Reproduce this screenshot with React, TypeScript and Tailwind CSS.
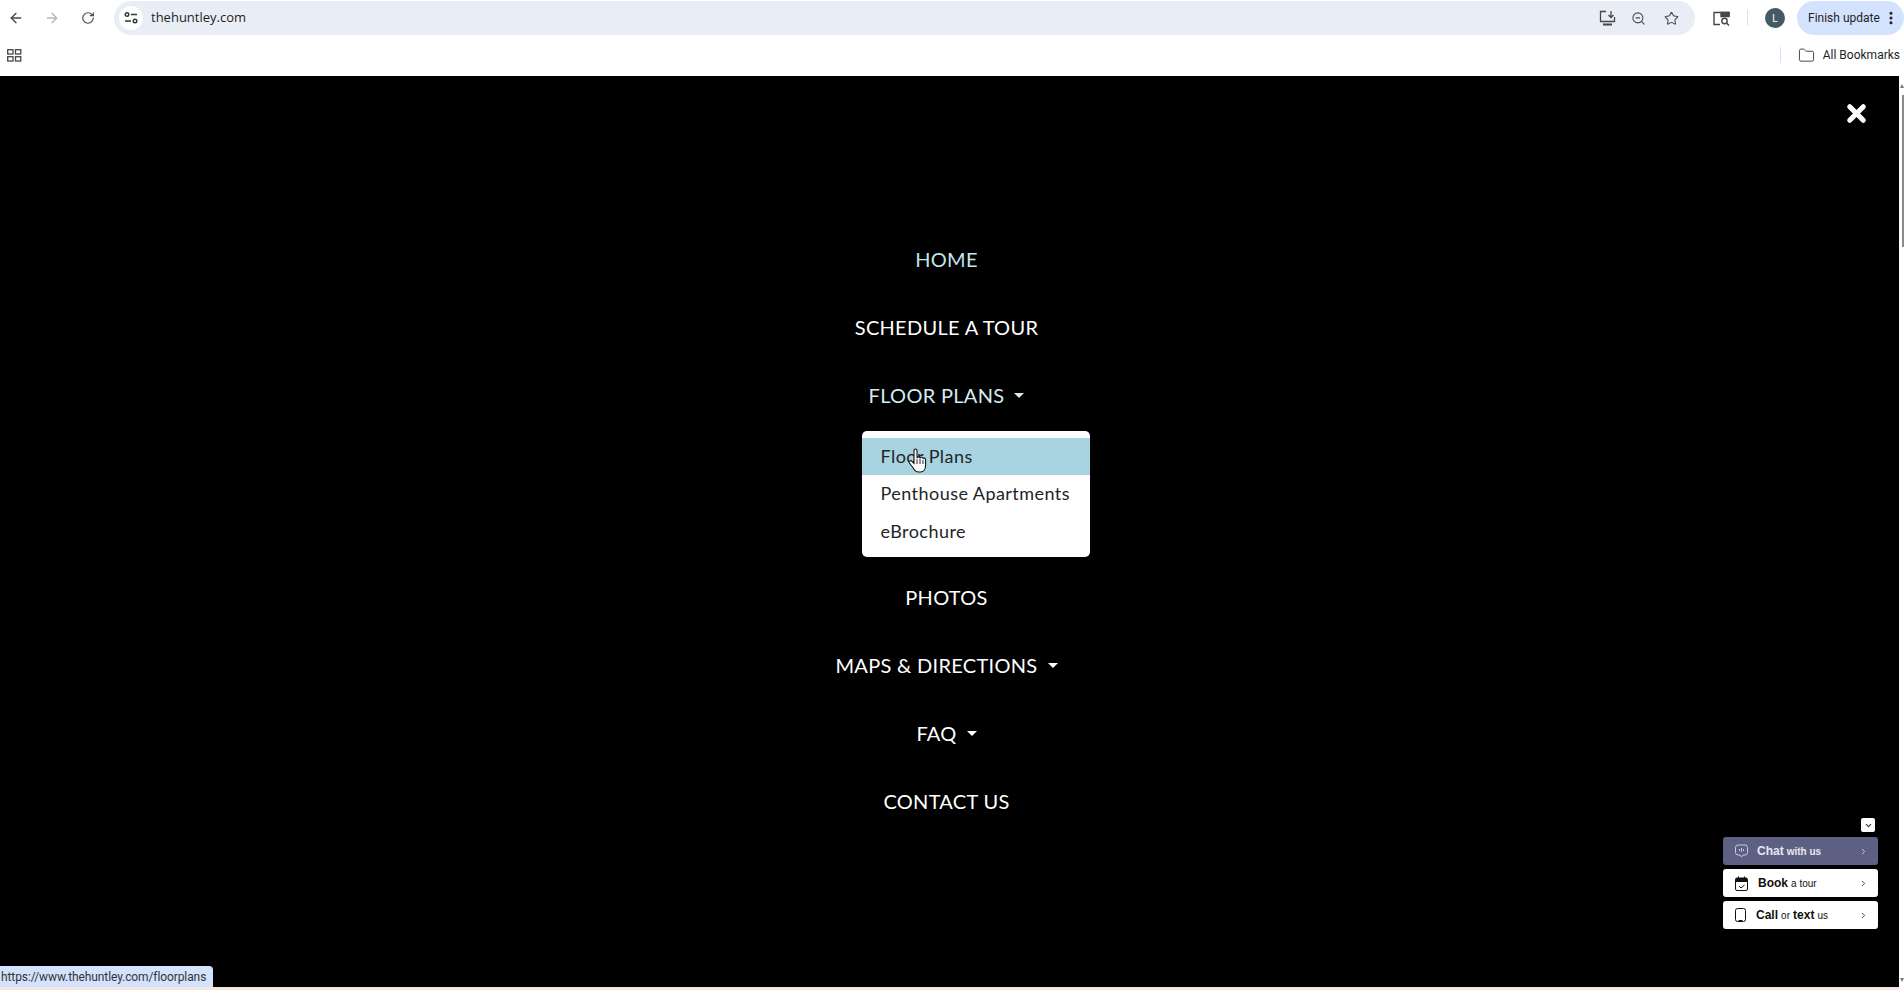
import { ArrowLeft, ArrowRight, RotateCw, Star, ZoomOut, Folder, EllipsisVertical, ChevronDown, ChevronRight, X } from 'lucide-react'

// Nav entries of the overlay menu
const navItems = [
  { label: 'HOME', tint: 'text-[#c4e4ec]' },
  { label: 'SCHEDULE A TOUR', tint: 'text-white' },
  { label: 'FLOOR PLANS', tint: 'text-[#d3ecf2]', caret: true, open: true },
  { label: 'PHOTOS', tint: 'text-white' },
  { label: 'MAPS & DIRECTIONS', tint: 'text-white', caret: true },
  { label: 'FAQ', tint: 'text-white', caret: true },
  { label: 'CONTACT US', tint: 'text-white' },
]

function Caret() {
  return <span className="ml-[10px] inline-block border-x-[5px] border-t-[5px] border-x-transparent border-t-current align-middle" />
}

function FloorPlansMenu() {
  return (
    <div className="relative left-[29px] mt-[2px] mb-[6px] w-[228px] rounded-[5px] bg-white py-[7px] text-[18px] leading-[37px] font-normal tracking-[0.45px] text-[#212529]">
      <div className="h-[37px] bg-[#a8d4e2] px-[19px]">Floor Plans</div>
      <div className="h-[38px] px-[19px]">Penthouse Apartments</div>
      <div className="h-[37px] px-[19px]">eBrochure</div>
      <svg className="absolute left-[46px] top-[17px]" width="20" height="26" viewBox="0 0 20 26">
        <path d="M6 2.500c0-2 3-2 3 0V10c.4-1.600 3-1.600 3 .3.4-1.600 2.800-1.400 3 .5.5-1.200 2.600-1 2.600 1V17c0 4-2 7-5 7h-2c-2.500 0-4-1.500-5-3.500L1.400 15c-1-2 1.300-3.200 2.600-1.500L6 15.500z" fill="#fff" stroke="#111" strokeWidth="1.100" />
        <path d="M9 11v5M12 11v5M15 12v4" stroke="#111" strokeWidth="0.900" />
      </svg>
    </div>
  )
}

function ChatWidget() {
  return (
    <div className="absolute bottom-[61px] right-[21px] flex w-[155px] flex-col items-end font-['Liberation_Sans',sans-serif] text-[11px]">
      <div className="mr-[3px] mb-[5px] flex h-[14px] w-[14px] items-center justify-center rounded-[2px] bg-white">
        <ChevronDown size={9} strokeWidth={3} color="#333" />
      </div>
      <div className="flex h-[28px] w-full items-center rounded-[3px] bg-[#5d6083] pl-[12px] pr-[10px] text-[#e8e8f0]">
        <svg width="13" height="14" viewBox="0 0 13 14" fill="none" stroke="#d5d6e2" strokeWidth="0.900">
          <path d="M3 1h7a2.500 2.500 0 0 1 2.500 2.500v5A2.500 2.500 0 0 1 10 11H8l-1.500 2L5 11H3A2.500 2.500 0 0 1 .5 8.500v-5A2.500 2.500 0 0 1 3 1z" />
          <path d="M4.500 5v2M6.500 4v4M8.500 5v2" />
        </svg>
        <span className="ml-[9px] flex-1 font-bold"><span className="text-[12px]">Chat</span> <span className="text-[10px]">with us</span></span>
        <ChevronRight size={9} strokeWidth={2} />
      </div>
      <div className="mt-[4px] flex h-[28px] w-full items-center rounded-[3px] bg-white pl-[12px] pr-[10px] text-[#111]">
        <svg width="13" height="15" viewBox="0 0 13 15" fill="none" stroke="#111" strokeWidth="1">
          <path d="M.5 5.500h12V13a1.500 1.500 0 0 1-1.500 1.500H2A1.500 1.500 0 0 1 .5 13z" />
          <path d="M.5 5.500V3.500A1.500 1.500 0 0 1 2 2h9a1.500 1.500 0 0 1 1.500 1.500v2z" fill="#111" />
          <path d="M3.500 .5v3M9.500 .5v3" />
          <path d="M4 10l2 2 3.500-3" />
        </svg>
        <span className="ml-[10px] flex-1"><span className="text-[12px] font-bold">Book</span> <span className="text-[10px]">a tour</span></span>
        <ChevronRight size={9} strokeWidth={2} />
      </div>
      <div className="mt-[4px] flex h-[28px] w-full items-center rounded-[3px] bg-white pl-[12px] pr-[10px] text-[#111]">
        <svg width="11" height="14" viewBox="0 0 11 14" fill="none" stroke="#111" strokeWidth="1">
          <rect x=".5" y=".5" width="10" height="13" rx="2" />
          <path d="M3.500 12.500h4" />
        </svg>
        <span className="ml-[10px] flex-1"><span className="text-[12px] font-bold">Call</span> <span className="text-[10px]">or</span> <span className="text-[12px] font-bold">text</span> <span className="text-[10px]">us</span></span>
        <ChevronRight size={9} strokeWidth={2} />
      </div>
    </div>
  )
}

export default function App() {
  return (
    <div className="flex h-[990px] w-[1904px] flex-col overflow-hidden bg-white font-['Liberation_Sans',sans-serif]">
      {/* toolbar */}
      <div className="flex h-[36px] shrink-0 items-center pl-[7px] text-[#474747]">
        <ArrowLeft size={16} strokeWidth={2} className="ml-[1px]" />
        <ArrowRight size={16} strokeWidth={2} className="ml-[20px] text-[#b5b5b5]" />
        <RotateCw size={14} strokeWidth={2} className="ml-[21px]" />
        <div className="ml-[19px] flex h-[34px] w-[1581px] items-center rounded-full bg-[#e9eef6]">
          <div className="ml-[5px] flex h-[24px] w-[24px] items-center justify-center rounded-full bg-white">
            <svg width="14" height="12" viewBox="0 0 14 12" fill="none" stroke="#333" strokeWidth="1.400">
              <circle cx="3" cy="2.500" r="1.800" />
              <path d="M7 2.500h6M1 9h6" />
              <circle cx="11" cy="9" r="1.800" />
            </svg>
          </div>
          <span className="ml-[8px] font-['Open_Sans',sans-serif] text-[13px] text-[#1f1f1f]">thehuntley.com</span>
          <div className="ml-auto flex items-center text-[#474747]">
            <svg width="17" height="16" viewBox="0 0 17 16" fill="none" stroke="#474747" strokeWidth="1.300">
              <path d="M7 1.500H1.500v10h14V7" />
              <path d="M4 14.500h9" strokeWidth="2" />
              <path d="M12 1v6M9.500 5l2.500 2.500L14.500 5" />
            </svg>
            <ZoomOut size={15} strokeWidth={1.700} className="ml-[15px]" />
            <Star size={15} strokeWidth={1.700} className="mr-[16px] ml-[18px]" />
          </div>
        </div>
        <svg className="ml-[18px]" width="17" height="15" viewBox="0 0 17 15" fill="none" stroke="#474747" strokeWidth="1.400">
          <path d="M7 13.500H1V1.500h15v4" />
          <path d="M8 1.500h8v4H8z" fill="#474747" />
          <circle cx="11.500" cy="10" r="2.700" />
          <path d="M13.500 12l2.500 2.500" />
        </svg>
        <div className="ml-[17px] h-[16px] w-[1px] bg-[#d3e3fd]" />
        <div className="ml-[17px] flex h-[20px] w-[20px] items-center justify-center rounded-full bg-[#455a64] text-[10px] text-white">L</div>
        <div className="ml-[12px] flex h-[34px] w-[107px] items-center rounded-full bg-[#d3e3fd] pl-[11px] font-['Roboto',sans-serif] text-[12px] whitespace-nowrap text-[#1f1f1f]">
          Finish update
          <EllipsisVertical size={16} strokeWidth={2.600} className="ml-[3px]" />
        </div>
      </div>
      {/* bookmarks bar */}
      <div className="flex h-[40px] shrink-0 items-center pb-[2px] pl-[7px]">
        <svg width="15" height="13" viewBox="0 0 15 13" fill="none" stroke="#474747" strokeWidth="1.300">
          <rect x=".7" y=".7" width="5.300" height="4.300" />
          <rect x="8.500" y=".7" width="5.300" height="4.300" />
          <rect x=".7" y="7.700" width="5.300" height="4.300" />
          <rect x="8.500" y="7.700" width="5.300" height="4.300" />
        </svg>
        <div className="ml-auto flex items-center">
          <div className="h-[16px] w-[1px] bg-[#d3e3fd]" />
          <Folder size={17} strokeWidth={1.400} color="#474747" className="ml-[17px]" />
          <span className="mr-[4px] ml-[8px] font-['Roboto',sans-serif] text-[12px] text-[#1f1f1f]">All Bookmarks</span>
        </div>
      </div>
      {/* page */}
      <div className="relative flex flex-1 overflow-hidden">
        <div className="relative flex-1 bg-black">
          <div className="flex flex-col items-center pt-[149px] pr-[6px] font-['Lato',sans-serif] text-[20px] leading-[34px] tracking-[0.3px]">
            {navItems.map(item => (
              <div key={item.label} className="flex flex-col items-center">
                <div className={`my-[17px] flex h-[34px] items-center ${item.tint}`}>
                  {item.label}
                  {item.caret && <Caret />}
                </div>
                {item.open && <FloorPlansMenu />}
              </div>
            ))}
          </div>
          <X size={27} strokeWidth={4.500} color="#fff" className="absolute top-[24px] right-[29px]" />
          <ChatWidget />
          <div className="absolute bottom-[3px] left-0 flex h-[21px] w-[213px] items-center rounded-tr-[4px] bg-[#d3e3fd] pl-[1px] font-['Roboto',sans-serif] text-[12px] tracking-[-0.1px] whitespace-nowrap text-[#333]">
            https://www.thehuntley.com/floorplans
          </div>
          <div className="absolute inset-x-0 bottom-0 h-[3px] bg-[#f5e6e0]" />
        </div>
        {/* scrollbar */}
        <div className="flex w-[5px] shrink-0 flex-col items-end bg-white pt-[8px]">
          <div className="h-0 w-0 border-x-[2px] border-b-[4px] border-x-transparent border-b-[#777]" />
          <div className="mt-[7px] h-[152px] w-[2px] bg-[#8b8b8b]" />
          <div className="mt-auto mb-[8px] h-0 w-0 border-x-[2px] border-t-[4px] border-x-transparent border-t-[#777]" />
        </div>
      </div>
    </div>
  )
}
